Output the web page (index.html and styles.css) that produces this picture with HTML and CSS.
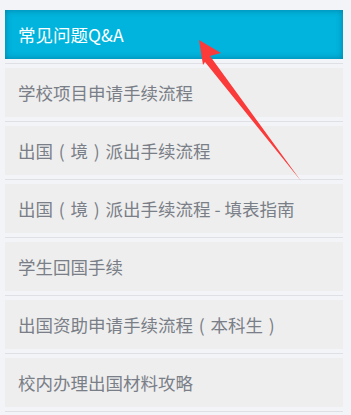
FILE: index.html
```html
<!DOCTYPE html>
<html lang="zh">
<head>
<meta charset="utf-8">
<link rel="stylesheet" href="styles.css">
</head>
<body>
<div class="page">
  <ul class="menu">
    <li class="item active">常见问题Q&amp;A</li>
    <li class="item">学校项目申请手续流程</li>
    <li class="item">出国<span class="paren">(</span>境<span class="paren">)</span>派出手续流程</li>
    <li class="item">出国<span class="paren">(</span>境<span class="paren">)</span>派出手续流程 - 填表指南</li>
    <li class="item">学生回国手续</li>
    <li class="item">出国资助申请手续流程<span class="paren">(</span>本科生<span class="paren">)</span></li>
    <li class="item">校内办理出国材料攻略</li>
  </ul>
  <svg class="arrow" width="351" height="415" viewBox="0 0 351 415">
    <polygon points="199,40 221,53 210,56 301,181 205,62 203,65" fill="#fb3a3a"/>
  </svg>
</div>
</body>
</html>
```
FILE: styles.css
```css
html, body {
  margin: 0;
  padding: 0;
  background: #f3f4f8;
}
.page {
  position: relative;
  width: 351px;
  height: 415px;
  overflow: hidden;
  font-family: "Noto Sans CJK SC", "Noto Sans", sans-serif;
}
.menu {
  list-style: none;
  margin: 0;
  padding: 10px 8px 0 5px;
  display: flex;
  flex-direction: column;
}
.item {
  height: 49px;
  line-height: 49px;
  background: #eeeeee;
  color: #7a7e87;
  font-size: 17.5px;
  padding-left: 13px;
  white-space: nowrap;
  position: relative;
  margin-bottom: 9px;
}
.item::after {
  content: "";
  position: absolute;
  left: 0;
  right: 0;
  bottom: -5px;
  height: 1px;
  background: #dfe0e5;
}
.item.active {
  background: #00b4dd;
  color: #ffffff;
  box-shadow: inset 0 0 6px rgba(0, 60, 90, 0.45);
}
.paren {
  display: inline-block;
  width: 1em;
  text-align: center;
}
.arrow {
  position: absolute;
  left: 0;
  top: 0;
  pointer-events: none;
}
```
